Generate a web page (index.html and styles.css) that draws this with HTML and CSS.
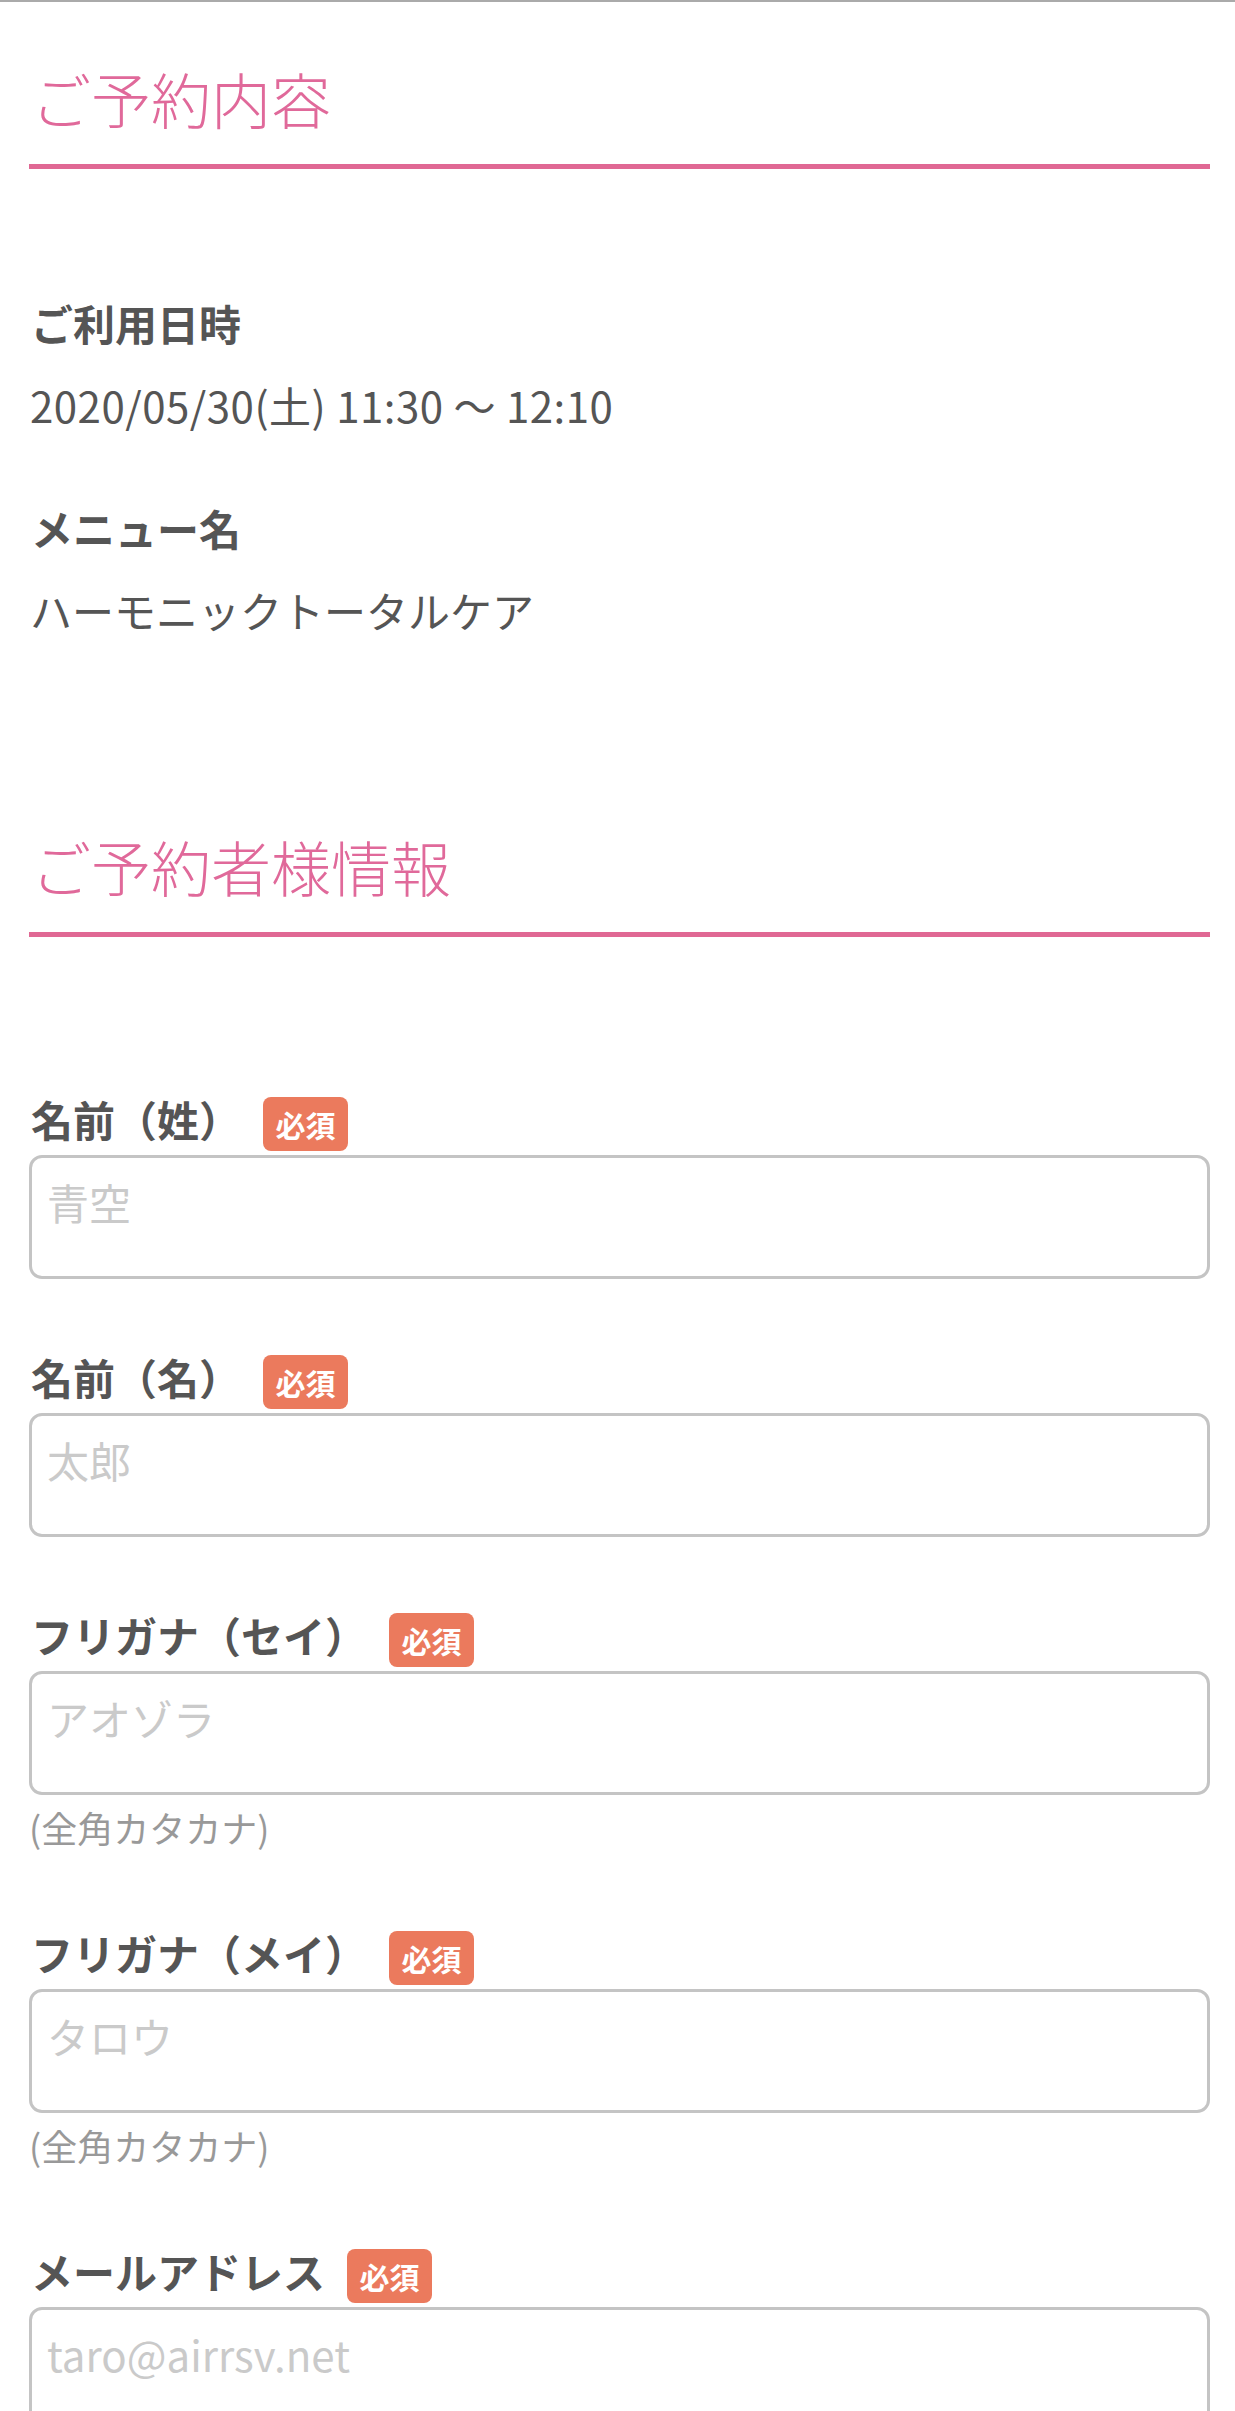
FILE: index.html
```html
<!DOCTYPE html>
<html lang="ja">
<head>
<meta charset="utf-8">
<title>ご予約内容</title>
<link rel="stylesheet" href="styles.css">
</head>
<body>
<div class="topbar"></div>
<main class="page">
  <section class="section section-first">
    <h2 class="sec-title">ご予約内容</h2>
    <dl class="summary">
      <div class="summary-item">
        <dt class="summary-label">ご利用日時</dt>
        <dd class="summary-value summary-date">2020/05/30(土) 11:30 〜 12:10</dd>
      </div>
      <div class="summary-item">
        <dt class="summary-label">メニュー名</dt>
        <dd class="summary-value">ハーモニックトータルケア</dd>
      </div>
    </dl>
  </section>
  <section class="section section-second">
    <h2 class="sec-title">ご予約者様情報</h2>
    <form class="form">
      <div class="field">
        <div class="field-head"><label class="field-label" for="f1">名前（姓）</label><span class="badge">必須</span></div>
        <input class="field-input" id="f1" type="text" placeholder="青空">
      </div>
      <div class="field">
        <div class="field-head"><label class="field-label" for="f2">名前（名）</label><span class="badge">必須</span></div>
        <input class="field-input" id="f2" type="text" placeholder="太郎">
      </div>
      <div class="field">
        <div class="field-head"><label class="field-label" for="f3">フリガナ（セイ）</label><span class="badge">必須</span></div>
        <input class="field-input" id="f3" type="text" placeholder="アオゾラ">
        <p class="field-note">(全角カタカナ)</p>
      </div>
      <div class="field">
        <div class="field-head"><label class="field-label" for="f4">フリガナ（メイ）</label><span class="badge">必須</span></div>
        <input class="field-input" id="f4" type="text" placeholder="タロウ">
        <p class="field-note">(全角カタカナ)</p>
      </div>
      <div class="field">
        <div class="field-head"><label class="field-label" for="f5">メールアドレス</label><span class="badge">必須</span></div>
        <input class="field-input" id="f5" type="email" placeholder="taro@airrsv.net">
      </div>
    </form>
  </section>
</main>
</body>
</html>
```

FILE: styles.css
```css
* { box-sizing: border-box; }

html, body {
  margin: 0;
  padding: 0;
  background: #fff;
}

body {
  font-family: "Noto Sans CJK JP", "Noto Sans", sans-serif;
  color: #555;
}

.topbar {
  height: 2px;
  background: #aaaaaa;
}

.page {
  padding: 0 25px 0 29px;
}

.section-first {
  padding-top: 51px;
}

.section-second {
  margin-top: 180px;
}

.sec-title {
  margin: 0;
  font-size: 60px;
  line-height: 90px;
  font-weight: 300;
  color: #e0699a;
  padding: 0 0 21px 2px;
  border-bottom: 5px solid #e06894;
}

.summary {
  margin: 122px 0 0;
  display: flex;
  flex-direction: column;
  gap: 60px;
}

.summary-item {
  display: flex;
  flex-direction: column;
  gap: 19px;
}

.summary-label {
  margin: 0;
  padding-left: 2px;
  font-size: 42px;
  line-height: 63px;
  font-weight: 700;
  color: #555;
}

.summary-value {
  margin: 0;
  padding-left: 1px;
  font-size: 42px;
  line-height: 63px;
  font-weight: 400;
  color: #555;
}

.summary-date {
  letter-spacing: 0.5px;
}

.form {
  margin-top: 160px;
  display: flex;
  flex-direction: column;
  gap: 76px;
}

.field {
  display: flex;
  flex-direction: column;
}

.field-head {
  display: flex;
  align-items: center;
  height: 54px;
  margin-bottom: 4px;
  padding-left: 2px;
}

.field-label {
  font-size: 42px;
  line-height: 48px;
  font-weight: 700;
  color: #555;
  margin-top: -10px;
  margin-right: 22px;
}

.badge {
  display: inline-flex;
  align-items: center;
  justify-content: center;
  width: 85px;
  height: 54px;
  border-radius: 8px;
  background: #eb7a5d;
  color: #fff;
  font-size: 30px;
  font-weight: 700;
  line-height: 1;
}

.field-input {
  display: block;
  width: 100%;
  height: 124px;
  margin: 0;
  padding: 12px 15px 44px;
  border: 3px solid #c4c4c4;
  border-radius: 13px;
  background: #fff;
  font-family: "Noto Sans CJK JP", "Noto Sans", sans-serif;
  font-size: 42px;
  line-height: 62px;
  color: #555;
  outline: none;
  -webkit-appearance: none;
  appearance: none;
}

.field-input::placeholder {
  color: #cacaca;
  opacity: 1;
}

.field-note {
  margin: 4px 0 0;
  font-size: 36px;
  line-height: 56px;
  color: #999;
}
```
